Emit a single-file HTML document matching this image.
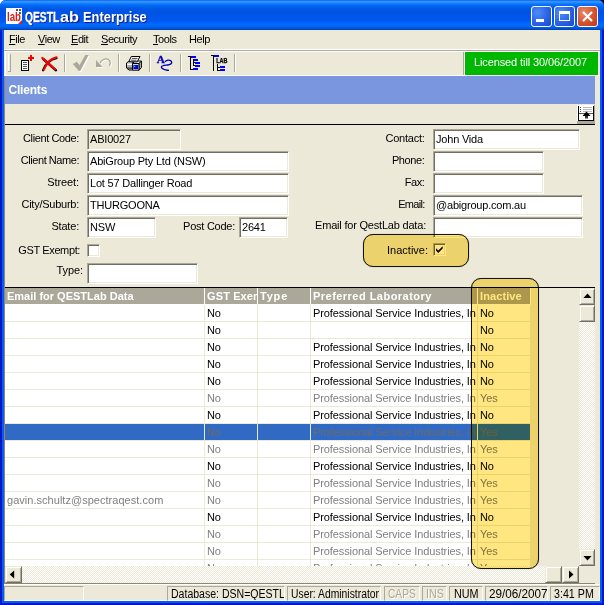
<!DOCTYPE html>
<html>
<head>
<meta charset="utf-8">
<title>QESTLab Enterprise</title>
<style>
*{box-sizing:border-box;margin:0;padding:0}
html,body{width:604px;height:605px;overflow:hidden;background:#ECE9D8}
body{position:relative;font-family:"Liberation Sans",Arial,sans-serif;font-size:11px;color:#000}
.abs{position:absolute}
#frame{left:0;top:0;width:604px;height:605px;background:#0A5CE8;border:2px solid #0019CF;border-top:0;border-radius:6px 6px 0 0}
#client{left:4px;top:30px;width:596px;height:571px;background:#ECE9D8;border-bottom:1px solid #fff}
#title{left:0;top:0;width:604px;height:30px;border-radius:6px 6px 0 0;
 background:linear-gradient(180deg,#0058EE 0%,#3593FF 4%,#288EFF 8%,#127DFF 12%,#036FFC 16%,#0262EE 22%,#0057E5 30%,#0054E3 40%,#0055EB 60%,#005BF5 72%,#026AFE 82%,#0062EF 90%,#0052D6 95%,#0040AB 100%);}
#ttext{left:25px;top:9px;font-weight:bold;font-size:14px;color:#fff;white-space:nowrap;text-shadow:1px 1px 0 #0A1883;transform-origin:0 0}
.tb{top:6px;width:21px;height:21px;border:1px solid #fff;border-radius:3px;
 background:radial-gradient(circle at 30% 30%,#4D8DF5 0%,#2A62E6 55%,#1A47C8 100%)}
.tb.close{background:radial-gradient(circle at 30% 30%,#E9886B 0%,#D5532F 55%,#B7371A 100%)}
.menu span{position:absolute;top:33px;font-size:11px;white-space:nowrap;letter-spacing:-0.45px}
.menu u{text-decoration:underline}
.lbl{position:absolute;white-space:nowrap;text-align:right;font-size:11px;letter-spacing:-0.38px}
.fld{position:absolute;height:21px;background:#fff;border:1px solid;border-color:#ACA899 #fff #fff #ACA899;box-shadow:inset 1px 1px 0 #716F64, inset -1px -1px 0 #ECE9D8;font-size:11px;line-height:19px;padding-left:2px;white-space:nowrap;overflow:hidden;letter-spacing:-0.2px}
.fld.dis{background:#ECE9D8}
.chk{position:absolute;width:13px;height:13px;background:#fff;border:1px solid;border-color:#ACA899 #fff #fff #ACA899;box-shadow:inset 1px 1px 0 #716F64, inset -1px -1px 0 #ECE9D8}

#grid{left:5px;top:288px;width:574px;height:278px;background:#ECE9D8;overflow:hidden}
#gridw{left:0;top:0;width:526px;height:278px;background:#fff}
.row{position:absolute;left:0;width:526px;height:17px;border-bottom:1px solid #ECE9D8;white-space:nowrap}
.row.k{color:#000}.row.g{color:#808080}.row.s{color:#6B6B6B;background:#316AC5}
.c{position:absolute;top:0;height:16px;line-height:16px;overflow:hidden;padding-left:2px;letter-spacing:-0.1px;border-right:1px solid #ECE9D8;font-size:11px}
.c1{left:0;width:200px;padding-left:2px;letter-spacing:.03px}.c2{left:200px;width:53px}.c3{left:253px;width:53px}.c4{left:306px;width:165px;border-right:0 !important}.c5{left:472px;width:54px;border-left:1px solid #ECE9D8}
.hdr{position:absolute;top:0;left:0;width:526px;height:17px;border-bottom:1px solid #fff;background:#ACA899;color:#fff;font-weight:bold;white-space:nowrap}
.hdr .c{border-right:1px solid #fff;height:16px;line-height:16px;letter-spacing:0}.hdr .c5{border-left:1px solid #fff}
.sbtn{position:absolute;width:16px;height:16px;background:#ECE9D8;border:1px solid;border-color:#ECE9D8 #716F64 #716F64 #ECE9D8;box-shadow:inset 1px 1px 0 #fff, inset -1px -1px 0 #ACA899}
.track{position:absolute;background:#F6F5EC;background-image:conic-gradient(#fff 25%,#ECE9D8 0 50%,#fff 0 75%,#ECE9D8 0);background-size:2px 2px}
.sp{position:absolute;top:586px;height:15px;border:1px solid;border-color:#ACA899 #fff #fff #ACA899;font-size:12px;line-height:14px;padding-left:3px;white-space:nowrap;overflow:hidden}
.hl{position:absolute;background:#FFE680;border:1px solid #15150a;border-radius:10px;mix-blend-mode:multiply;box-shadow:0 0 .8px rgba(0,0,0,.55)}
</style>
</head>
<body>
<div class="abs" style="left:0;top:0;width:8px;height:8px;background:#fff"></div><div class="abs" style="left:596px;top:0;width:8px;height:8px;background:linear-gradient(90deg,#fff 0,#fff 50%,#000 50%)"></div>
<div id="frame" class="abs"></div>
<div id="title" class="abs"></div>
<div id="client" class="abs"></div>
<div id="ttext" class="abs"><span style="position:absolute;left:0;top:0;transform:scaleX(.735);transform-origin:0 0;-webkit-text-stroke:.35px #fff">QESTL</span><span style="position:absolute;left:34.500px;top:0;transform:scaleX(1.16);transform-origin:0 0">ab</span><span style="position:absolute;left:58px;top:0;transform:scaleX(.92);transform-origin:0 0">Enterprise</span></div>
<div class="abs tb" style="left:531px"></div>
<div class="abs tb" style="left:554px"></div>
<div class="abs tb close" style="left:577px"></div>

<svg class="abs" style="left:524px;top:0" width="80" height="30" viewBox="524 0 80 30" shape-rendering="crispEdges">
<rect x="536" y="19" width="8" height="3" fill="#fff"/>
<rect x="559.5" y="12" width="10" height="8.5" fill="none" stroke="#fff" stroke-width="1"/><rect x="559" y="11" width="11" height="3" fill="#fff"/>
<path d="M583 12 L592 21 M592 12 L583 21" stroke="#fff" stroke-width="2.2" fill="none" shape-rendering="auto" stroke-linecap="butt"/>
</svg>
<div class="menu">
<span style="left:9px"><u>F</u>ile</span>
<span style="left:38px"><u>V</u>iew</span>
<span style="left:71px"><u>E</u>dit</span>
<span style="left:101px"><u>S</u>ecurity</span>
<span style="left:153px"><u>T</u>ools</span>
<span style="left:189px">Help</span>
</div>


<svg class="abs" style="left:0;top:0" width="604" height="80" viewBox="0 0 604 80" shape-rendering="crispEdges">
<!-- app icon -->
<rect x="6" y="8" width="16" height="16" fill="#fff"/>
<path d="M22 20 L22 24 L18 24 Z" fill="#D8201C" shape-rendering="auto"/>
<rect x="16" y="9" width="2" height="2" fill="#555"/><rect x="19" y="9" width="2" height="2" fill="#555"/><rect x="19" y="12" width="2" height="2" fill="#555"/>
<text x="7" y="21.3" font-family="Liberation Sans, sans-serif" font-size="12.5" font-weight="bold" fill="#D8201C" textLength="14" lengthAdjust="spacingAndGlyphs" style="shape-rendering:auto">lab</text>
<!-- gripper -->
<rect x="8" y="54" width="3" height="18" fill="#ACA899"/><rect x="8" y="54" width="2" height="17" fill="#fff"/><rect x="9" y="55" width="1" height="16" fill="#ECE9D8"/>
<rect x="64" y="54" width="1" height="18" fill="#ACA899"/><rect x="65" y="54" width="1" height="18" fill="#fff"/><rect x="118" y="54" width="1" height="18" fill="#ACA899"/><rect x="119" y="54" width="1" height="18" fill="#fff"/><rect x="149" y="54" width="1" height="18" fill="#ACA899"/><rect x="150" y="54" width="1" height="18" fill="#fff"/><rect x="180" y="54" width="1" height="18" fill="#ACA899"/><rect x="181" y="54" width="1" height="18" fill="#fff"/><rect x="234" y="54" width="1" height="18" fill="#ACA899"/><rect x="235" y="54" width="1" height="18" fill="#fff"/>
<!-- new doc -->
<rect x="21.5" y="60.5" width="7" height="10" fill="#fff" stroke="#000" stroke-width="1"/>
<rect x="23" y="62" width="4" height="1" fill="#555"/><rect x="23" y="64" width="4" height="1" fill="#555"/><rect x="23" y="66" width="4" height="1" fill="#555"/><rect x="23" y="68" width="4" height="1" fill="#555"/>
<rect x="28" y="57" width="6" height="2" fill="#F00"/><rect x="30" y="55" width="2" height="6" fill="#F00"/>
<!-- delete X -->
<g shape-rendering="auto" fill="none" stroke-linecap="round">
<path d="M43.200 59 L56 70.300" stroke="#000" stroke-width="2.400"/>
<path d="M56.500 58.200 C51 59.200 46 63 43 70.300" stroke="#000" stroke-width="2.200"/>
<path d="M42.300 58 L54.800 69.300" stroke="#F00" stroke-width="2.200"/>
<path d="M56.500 57.300 C51.500 58.300 47 62 44 69.500" stroke="#F00" stroke-width="2"/>
</g>
<!-- check (disabled) -->
<g shape-rendering="auto">
<path d="M72.800 64 L76.800 61.800 L79.600 65 L85.300 55 L88.600 55 L80.300 71 L78.800 71 Z" fill="#fff" transform="translate(1,1)"/>
<path d="M72.800 64 L76.800 61.800 L79.600 65 L85.300 55 L88.600 55 L80.300 71 L78.800 71 Z" fill="#ACA899"/>
</g>
<!-- undo (disabled) -->
<g shape-rendering="auto" fill="none">
<path d="M96 60 L96 67 L102.500 67 Z" fill="#fff" stroke="none" transform="translate(1,1)"/>
<path d="M100 63 C101.500 60 105 57.800 108 59.300 C110.500 60.800 110.800 64 109.300 66" stroke="#fff" stroke-width="1.300" transform="translate(1,1)"/>
<path d="M96 60 L96 67 L102.500 67 Z" fill="#ACA899" stroke="none"/>
<path d="M100 63 C101.500 60 105 57.800 108 59.300 C110.500 60.800 110.800 64 109.300 66" stroke="#ACA899" stroke-width="1.300"/>
</g>
<!-- printer -->
<g shape-rendering="auto" stroke-linejoin="round">
<path d="M132.500 63.500 L135 61 L141.500 61 L139 63.500 Z" fill="#E8E8E8" stroke="#000" stroke-width=".9"/>
<path d="M139 63.500 L141.500 61 L141.500 67.500 L139 70.200 Z" fill="#A8A8A8" stroke="#000" stroke-width=".9"/>
<path d="M126.500 63 L128.700 61.500 L133 61.500 L132.500 70 L129 70 L126.500 68 Z" fill="#C8C8C8" stroke="#000" stroke-width="1"/>
<rect x="127.300" y="63.800" width="5" height="1.200" fill="#fff"/>
<rect x="127.300" y="65" width="4.500" height="2" fill="#B0B0B0"/>
<rect x="127" y="67.600" width="5.500" height="1" fill="#000"/>
<rect x="132.500" y="63.500" width="6.500" height="6.700" fill="#D8D8D8" stroke="#000" stroke-width="1"/>
<rect x="133.400" y="65" width="4.700" height="4" fill="#0000E6"/>
<rect x="134" y="65.800" width="1.300" height="1.300" fill="#00D8FF"/>
<path d="M131.300 56.500 L140 56.500 L137.200 61.800 L128.700 61.800 Z" fill="#fff" stroke="#000" stroke-width="1"/>
<path d="M132 58.400 L137.600 58.400 M130.800 60.200 L136.500 60.200" stroke="#333" stroke-width=".9" fill="none"/>
</g>
<!-- A squiggle -->
<g shape-rendering="auto">
<text x="156.700" y="62.700" font-family="Liberation Serif, serif" font-weight="bold" font-size="11.200" fill="#0000C0" stroke="#0000C0" stroke-width=".3">A</text>
<path d="M164.900 61.700 C165.800 61 166.500 60.400 168 60.200 C170 60 171.600 60.800 171.700 62.300 C171.800 64.300 169.500 64.800 167.500 65 C165 65.300 161.500 65.300 161.400 67 C161.300 68.500 163.500 69.300 165.500 69.800 C166.800 70.100 168 70.300 169 70.400" fill="none" stroke="#0000B8" stroke-width="1.350"/>
</g>
<!-- tree 1 -->
<rect x="188" y="56" width="3" height="1" fill="#000"/><rect x="190" y="56" width="1" height="14" fill="#000"/>
<rect x="191" y="56" width="5" height="2" fill="#0000FF"/>
<rect x="193" y="59" width="1" height="7" fill="#000"/><rect x="194" y="59" width="4" height="2" fill="#0000FF"/>
<rect x="193" y="62" width="2" height="1" fill="#000"/><rect x="195" y="62" width="5" height="2" fill="#0000FF"/>
<rect x="193" y="65" width="2" height="1" fill="#000"/><rect x="195" y="65" width="5" height="2" fill="#0000FF"/>
<rect x="190" y="69" width="3" height="1" fill="#000"/><rect x="193" y="68" width="5" height="2" fill="#0000FF"/>
<!-- tree 2 -->
<rect x="211" y="55" width="3" height="1" fill="#000"/><rect x="213" y="55" width="1" height="16" fill="#000"/>
<rect x="214" y="55" width="5" height="2" fill="#0000FF"/>
<text x="216.300" y="63.300" font-family="Liberation Sans, sans-serif" font-weight="bold" font-size="6.600" fill="#000" stroke="#000" stroke-width=".25" textLength="11.200" lengthAdjust="spacingAndGlyphs" style="shape-rendering:auto">LAB</text>
<rect x="217" y="64" width="1" height="7" fill="#000"/><rect x="217" y="67" width="3" height="1" fill="#000"/><rect x="217" y="70" width="3" height="1" fill="#000"/>
<rect x="220" y="66" width="5" height="2" fill="#0000FF"/><rect x="220" y="69" width="5" height="2" fill="#0000FF"/>
</svg>
<!-- toolbar -->
<div class="abs" style="left:4px;top:49px;width:596px;height:1px;background:#fff"></div>
<div class="abs" style="left:4px;top:50px;width:596px;height:1px;background:#ACA899"></div>
<div class="abs" style="left:4px;top:51px;width:596px;height:1px;background:#fff"></div>
<div class="abs" style="left:5px;top:51px;width:1px;height:24px;background:#fff"></div>
<div class="abs" style="left:4px;top:75px;width:596px;height:1px;background:#fff"></div>
<div class="abs" style="left:463px;top:52px;width:1px;height:23px;background:#ACA899"></div>
<div class="abs" style="left:464px;top:52px;width:1px;height:23px;background:#fff"></div>
<div class="abs" style="left:465px;top:52px;width:133px;height:23px;background:#00B700;color:#fff;text-align:center;line-height:20px;font-size:11px;letter-spacing:-0.1px;padding-right:2px">Licensed till 30/06/2007</div>

<!-- Clients band -->
<div class="abs" style="left:4px;top:76px;width:591px;height:28px;background:#7A96DF"></div>
<div class="abs" style="left:8.500px;top:83px;font-weight:bold;font-size:12px;color:#fff;letter-spacing:-0.2px">Clients</div>

<div class="abs" style="left:5px;top:124px;width:590px;height:1px;background:#000"></div>

<svg class="abs" style="left:574px;top:102px" width="24" height="24" viewBox="574 102 24 24" shape-rendering="crispEdges">
<rect x="577" y="105" width="18" height="19" fill="#ACA899"/>
<rect x="577" y="105" width="17" height="16" fill="#fff"/>
<rect x="578" y="106" width="16" height="15" fill="#000"/>
<rect x="579" y="106" width="14" height="14" fill="#fff"/>
<rect x="580" y="107" width="1" height="1" fill="#444"/><rect x="583" y="107" width="9" height="1" fill="#BBB"/>
<rect x="580" y="109" width="1" height="1" fill="#444"/><rect x="583" y="109" width="9" height="1" fill="#BBB"/>
<rect x="580" y="111" width="1" height="1" fill="#444"/><rect x="583" y="111" width="9" height="1" fill="#BBB"/>
<rect x="579" y="113" width="14" height="1" fill="#555"/>
<path d="M586.5 111.5 L590.5 116 L582.5 116 Z" fill="#000" shape-rendering="auto"/>
<rect x="585" y="116" width="3" height="2" fill="#333"/><rect x="585" y="118" width="3" height="1" fill="#999"/>
</svg>
<!-- form -->
<div class="lbl" style="right:525px;top:132px">Client Code:</div>
<div class="fld dis" style="left:87px;top:129px;width:94px">ABI0027</div>
<div class="lbl" style="right:525px;top:154px;letter-spacing:-0.45px">Client Name:</div>
<div class="fld" style="left:87px;top:151px;width:202px">AbiGroup Pty Ltd (NSW)</div>
<div class="lbl" style="right:525px;top:176px;letter-spacing:-0.1px">Street:</div>
<div class="fld" style="left:87px;top:173px;width:202px">Lot 57 Dallinger Road</div>
<div class="lbl" style="right:525px;top:198px;letter-spacing:-0.25px">City/Suburb:</div>
<div class="fld" style="left:87px;top:195px;width:202px">THURGOONA</div>
<div class="lbl" style="right:525px;top:220px;letter-spacing:-0.2px">State:</div>
<div class="fld" style="left:87px;top:217px;width:69px">NSW</div>
<div class="lbl" style="right:369px;top:220px;letter-spacing:-0.25px">Post Code:</div>
<div class="fld" style="left:239px;top:217px;width:49px">2641</div>
<div class="lbl" style="right:524px;top:244px">GST Exempt:</div>
<div class="chk" style="left:87px;top:244px"></div>
<div class="lbl" style="right:521px;top:264px;letter-spacing:-0.1px">Type:</div>
<div class="fld" style="left:87px;top:263px;width:111px"></div>

<div class="lbl" style="right:179.500px;top:132px;letter-spacing:-0.25px">Contact:</div>
<div class="fld" style="left:433px;top:129px;width:147px">John Vida</div>
<div class="lbl" style="right:179.500px;top:154px">Phone:</div>
<div class="fld" style="left:433px;top:151px;width:111px"></div>
<div class="lbl" style="right:179.500px;top:176px">Fax:</div>
<div class="fld" style="left:433px;top:173px;width:111px"></div>
<div class="lbl" style="right:179.500px;top:198px;letter-spacing:-0.7px">Email:</div>
<div class="fld" style="left:433px;top:195px;width:150px">@abigroup.com.au</div>
<div class="lbl" style="right:178px;top:218.500px;letter-spacing:-0.2px">Email for QestLab data:</div>
<div class="fld" style="left:433px;top:217px;width:150px"></div>
<div class="lbl" style="right:176px;top:244px;letter-spacing:0">Inactive:</div>
<div class="chk" style="left:433px;top:243px"></div><svg class="abs" style="left:433px;top:243px" width="13" height="13" viewBox="0 0 13 13"><path d="M3 5.2 L5.2 7.6 L9.7 3.2 L9.7 5.6 L5.2 10 L3 7.600 Z" fill="#000"/></svg>


<!-- grid -->
<div class="abs" style="left:5px;top:287px;width:590px;height:1px;background:#000"></div>
<div id="grid" class="abs">
<div id="gridw" class="abs"></div>
<div class="hdr"><span class="c c1">Email for QESTLab Data</span><span class="c c2" style="letter-spacing:.12px">GST Exempt</span><span class="c c3" style="letter-spacing:.8px">Type</span><span class="c c4" style="letter-spacing:.47px">Preferred Laboratory</span><span class="c c5" style="letter-spacing:.1px">Inactive</span></div>
<div class="row k" style="top:17px"><span class="c c1"></span><span class="c c2">No</span><span class="c c3"></span><span class="c c4">Professional Service Industries, Inc.</span><span class="c c5">No</span></div>
<div class="row k" style="top:34px"><span class="c c1"></span><span class="c c2">No</span><span class="c c3"></span><span class="c c4"></span><span class="c c5">No</span></div>
<div class="row k" style="top:51px"><span class="c c1"></span><span class="c c2">No</span><span class="c c3"></span><span class="c c4">Professional Service Industries, Inc.</span><span class="c c5">No</span></div>
<div class="row k" style="top:68px"><span class="c c1"></span><span class="c c2">No</span><span class="c c3"></span><span class="c c4">Professional Service Industries, Inc.</span><span class="c c5">No</span></div>
<div class="row k" style="top:85px"><span class="c c1"></span><span class="c c2">No</span><span class="c c3"></span><span class="c c4">Professional Service Industries, Inc.</span><span class="c c5">No</span></div>
<div class="row g" style="top:102px"><span class="c c1"></span><span class="c c2">No</span><span class="c c3"></span><span class="c c4">Professional Service Industries, Inc.</span><span class="c c5">Yes</span></div>
<div class="row k" style="top:119px"><span class="c c1"></span><span class="c c2">No</span><span class="c c3"></span><span class="c c4">Professional Service Industries, Inc.</span><span class="c c5">No</span></div>
<div class="row s" style="top:136px"><span class="c c1"></span><span class="c c2">No</span><span class="c c3"></span><span class="c c4">Professional Service Industries, Inc.</span><span class="c c5">Yes</span></div>
<div class="row g" style="top:153px"><span class="c c1"></span><span class="c c2">No</span><span class="c c3"></span><span class="c c4">Professional Service Industries, Inc.</span><span class="c c5">Yes</span></div>
<div class="row k" style="top:170px"><span class="c c1"></span><span class="c c2">No</span><span class="c c3"></span><span class="c c4">Professional Service Industries, Inc.</span><span class="c c5">No</span></div>
<div class="row g" style="top:187px"><span class="c c1"></span><span class="c c2">No</span><span class="c c3"></span><span class="c c4">Professional Service Industries, Inc.</span><span class="c c5">Yes</span></div>
<div class="row g" style="top:204px"><span class="c c1">gavin.schultz@spectraqest.com</span><span class="c c2">No</span><span class="c c3"></span><span class="c c4">Professional Service Industries, Inc.</span><span class="c c5">Yes</span></div>
<div class="row k" style="top:221px"><span class="c c1"></span><span class="c c2">No</span><span class="c c3"></span><span class="c c4">Professional Service Industries, Inc.</span><span class="c c5">No</span></div>
<div class="row g" style="top:238px"><span class="c c1"></span><span class="c c2">No</span><span class="c c3"></span><span class="c c4">Professional Service Industries, Inc.</span><span class="c c5">Yes</span></div>
<div class="row g" style="top:255px"><span class="c c1"></span><span class="c c2">No</span><span class="c c3"></span><span class="c c4">Professional Service Industries, Inc.</span><span class="c c5">Yes</span></div>
<div class="row g" style="top:272px"><span class="c c1"></span><span class="c c2">No</span><span class="c c3"></span><span class="c c4">Professional Service Industries, Inc.</span><span class="c c5">Yes</span></div>

</div>
<!-- v scrollbar -->
<div class="track" style="left:579px;top:288px;width:16px;height:278px"></div>
<div class="sbtn" style="left:579px;top:288px;height:17px"></div>
<div class="sbtn" style="left:579px;top:305px;height:17px"></div>
<div class="sbtn" style="left:579px;top:549px;height:17px"></div>
<!-- h scrollbar -->
<div class="track" style="left:5px;top:566px;width:574px;height:17px"></div>
<div class="sbtn" style="left:5px;top:566px;width:17px;height:17px"></div>
<div class="sbtn" style="left:545px;top:566px;width:17px;height:17px"></div>
<div class="sbtn" style="left:562px;top:566px;width:17px;height:17px"></div>
<div class="abs" style="left:579px;top:566px;width:16px;height:17px;background:#ECE9D8"></div>
<div class="abs" style="left:4px;top:583px;width:591px;height:1px;background:#8A8672"></div>
<div class="abs" style="left:4px;top:584px;width:596px;height:1px;background:#fff"></div>
<div class="abs" style="left:4px;top:76px;width:1px;height:508px;background:#8A8672"></div>
<svg class="abs" style="left:0;top:280px" width="604" height="310" viewBox="0 280 604 310">
<path d="M587.5 293.500 L591.500 298 L583.500 298 Z" fill="#000"/>
<path d="M587.500 560.500 L591.500 556 L583.500 556 Z" fill="#000"/>
<path d="M9.700 574.500 L14.200 570.500 L14.200 578.500 Z" fill="#000"/>
<path d="M573.500 574.500 L569 570.500 L569 578.500 Z" fill="#000"/>
</svg>
<!-- status bar -->
<div class="sp" style="left:4px;width:80px"></div>
<div class="sp" style="left:167px;width:118px"><span style="display:inline-block;transform-origin:0 50%;transform:scaleX(0.878)">Database: DSN=QESTLab</span></div>
<div class="sp" style="left:287px;width:94px"><span style="display:inline-block;transform-origin:0 50%;transform:scaleX(0.862)">User: Administrator</span></div>
<div class="sp" style="left:384px;width:36px;color:#ACA899"><span style="display:inline-block;transform-origin:0 50%;transform:scaleX(0.85);text-shadow:1px 1px 0 #fff">CAPS</span></div>
<div class="sp" style="left:422px;width:25px;color:#ACA899"><span style="display:inline-block;transform-origin:0 50%;transform:scaleX(0.89);text-shadow:1px 1px 0 #fff">INS</span></div>
<div class="sp" style="left:449px;width:34px;padding-left:4px"><span style="display:inline-block;transform-origin:0 50%;transform:scaleX(0.9)">NUM</span></div>
<div class="sp" style="left:485px;width:63px"><span style="display:inline-block;transform-origin:0 50%;transform:scaleX(0.975)">29/06/2007</span></div>
<div class="sp" style="left:550px;width:50px"><span style="display:inline-block;transform-origin:0 50%;transform:scaleX(0.89)">3:41 PM</span></div>

<!-- highlights -->
<div class="hl" style="left:363px;top:234px;width:106px;height:33px"></div>
<div class="hl" style="left:471px;top:278px;width:68px;height:291px"></div>
</body>
</html>
